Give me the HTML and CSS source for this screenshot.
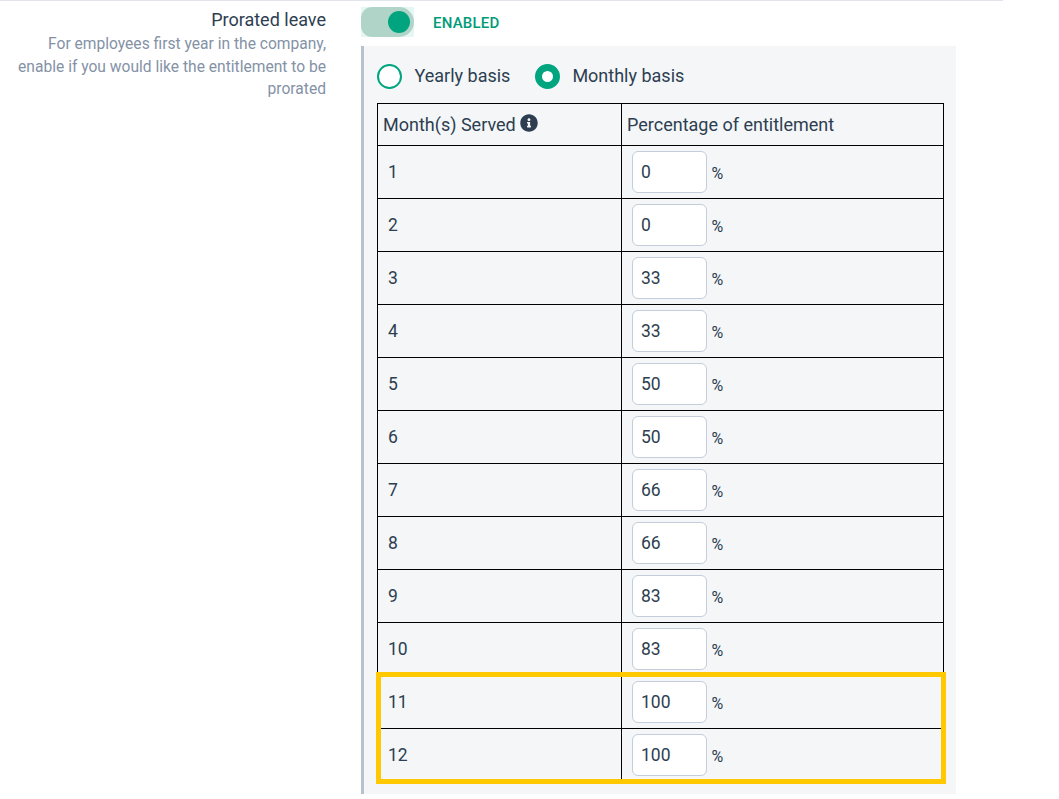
FILE: index.html
```html
<!DOCTYPE html>
<html lang="en">
<head>
<meta charset="utf-8">
<title>Prorated leave</title>
<link rel="stylesheet" href="styles.css">
</head>
<body>
<div class="page">
  <div class="setting">
    <div class="label-col">
      <div class="label-title">Prorated leave</div>
      <div class="label-desc">For employees first year in the company, enable if you would like the entitlement to be prorated</div>
    </div>
    <div class="content-col">
      <div class="toggle-row">
        <span class="toggle"><span class="toggle-track"><span class="toggle-knob"></span></span></span>
        <span class="toggle-text">ENABLED</span>
      </div>
      <div class="panel">
        <div class="radios">
          <span class="radio"></span><span class="radio-label">Yearly basis</span>
          <span class="radio radio-on"></span><span class="radio-label">Monthly basis</span>
        </div>
        <div class="table-wrap">
          <table class="grid">
            <thead>
              <tr>
                <th class="col-a">Month(s) Served <svg class="info" viewBox="0 0 512 512" width="18" height="18"><path fill="#2d3e50" d="M256 8C119 8 8 119 8 256s111 248 248 248 248-111 248-248S393 8 256 8zm0 110c23 0 42 19 42 42s-19 42-42 42-42-19-42-42 19-42 42-42zm56 254c0 7-5 12-12 12h-88c-7 0-12-5-12-12v-24c0-7 5-12 12-12h12v-64h-12c-7 0-12-5-12-12v-24c0-7 5-12 12-12h64c7 0 12 5 12 12v100h12c7 0 12 5 12 12v24z"/></svg></th>
                <th class="col-b">Percentage of entitlement</th>
              </tr>
            </thead>
            <tbody>
              <tr><td>1</td><td><span class="field">0</span><span class="pct">%</span></td></tr>
              <tr><td>2</td><td><span class="field">0</span><span class="pct">%</span></td></tr>
              <tr><td>3</td><td><span class="field">33</span><span class="pct">%</span></td></tr>
              <tr><td>4</td><td><span class="field">33</span><span class="pct">%</span></td></tr>
              <tr><td>5</td><td><span class="field">50</span><span class="pct">%</span></td></tr>
              <tr><td>6</td><td><span class="field">50</span><span class="pct">%</span></td></tr>
              <tr><td>7</td><td><span class="field">66</span><span class="pct">%</span></td></tr>
              <tr><td>8</td><td><span class="field">66</span><span class="pct">%</span></td></tr>
              <tr><td>9</td><td><span class="field">83</span><span class="pct">%</span></td></tr>
              <tr><td>10</td><td><span class="field">83</span><span class="pct">%</span></td></tr>
              <tr><td>11</td><td><span class="field">100</span><span class="pct">%</span></td></tr>
              <tr><td>12</td><td><span class="field">100</span><span class="pct">%</span></td></tr>
            </tbody>
          </table>
          <div class="highlight"></div>
        </div>
      </div>
    </div>
  </div>
</div>
</body>
</html>
```
FILE: styles.css
```css
html, body { margin: 0; padding: 0; background: #fff; }
body { font-family: Roboto, "Liberation Sans", sans-serif; color: #2d3e50; height: 799px; overflow: hidden; }
.page { width: 1003px; border-top: 1px solid #e2e6ec; }
.setting { display: flex; }
.label-col { width: 326px; text-align: right; padding-top: 8px; flex: none; }
.label-title { font-size: 18px; line-height: 21px; color: #2d3e50; }
.label-desc { font-size: 15.6px; line-height: 22.5px; color: #8492a6; margin-top: 3px; padding-left: 12px; }
.content-col { margin-left: 35px; width: 595px; flex: none; }
.toggle-row { display: flex; align-items: center; height: 30px; margin-top: 6px; }
.toggle { width: 53px; height: 30px; background: #e6f6f2; display: block; flex: none; }
.toggle-track { display: flex; justify-content: flex-end; align-items: center; width: 53px; height: 30px; background: #b0d4c8; border-radius: 15px 20px 20px 15px; box-sizing: border-box; padding-right: 4px; }
.toggle-knob { width: 22px; height: 22px; border-radius: 50%; background: #00a580; display: block; }
.toggle-text { margin-left: 19px; margin-top: 1px; font-size: 15px; font-weight: 500; color: #009b78; letter-spacing: 0.2px; }
.panel { margin-top: 9px; background: #f4f6f8; border-left: 3px solid #b8c2cc; padding: 17px 12px 12px 13px; height: 748px; box-sizing: border-box; }
.radios { display: flex; align-items: center; height: 26px; font-size: 18px; }
.radio { width: 25px; height: 25px; border: 2px solid #00a580; border-radius: 50%; background: #fff; box-sizing: border-box; flex: none; }
.radio-on { border-width: 7px; }
.radio-label { margin-left: 12.5px; margin-right: 24.5px; margin-top: -2px; color: #2d3e50; }
.table-wrap { position: relative; margin-top: 14px; }
.grid { border-collapse: collapse; width: 567px; table-layout: fixed; font-size: 16px; }
.grid th, .grid td { border: 1px solid #000; text-align: left; padding: 0; font-weight: 400; }
.grid th { height: 41px; font-size: 18px; padding-left: 5px; }
.grid .col-a { width: 238px; }
.info { vertical-align: -1px; }
.grid td { height: 52px; font-size: 17.5px; padding-left: 10px; }
.field { display: inline-flex; align-items: center; width: 75px; height: 42px; box-sizing: border-box; border: 1px solid #c3cddb; border-radius: 6px; background: #fff; padding-left: 8px; vertical-align: middle; }
.pct { font-size: 16px; margin-left: 4.5px; position: relative; top: 1px; vertical-align: middle; }
.highlight { position: absolute; left: -1px; right: -2px; bottom: -2px; height: 112px; box-sizing: border-box; border: 5px solid #ffc800; pointer-events: none; }
```
